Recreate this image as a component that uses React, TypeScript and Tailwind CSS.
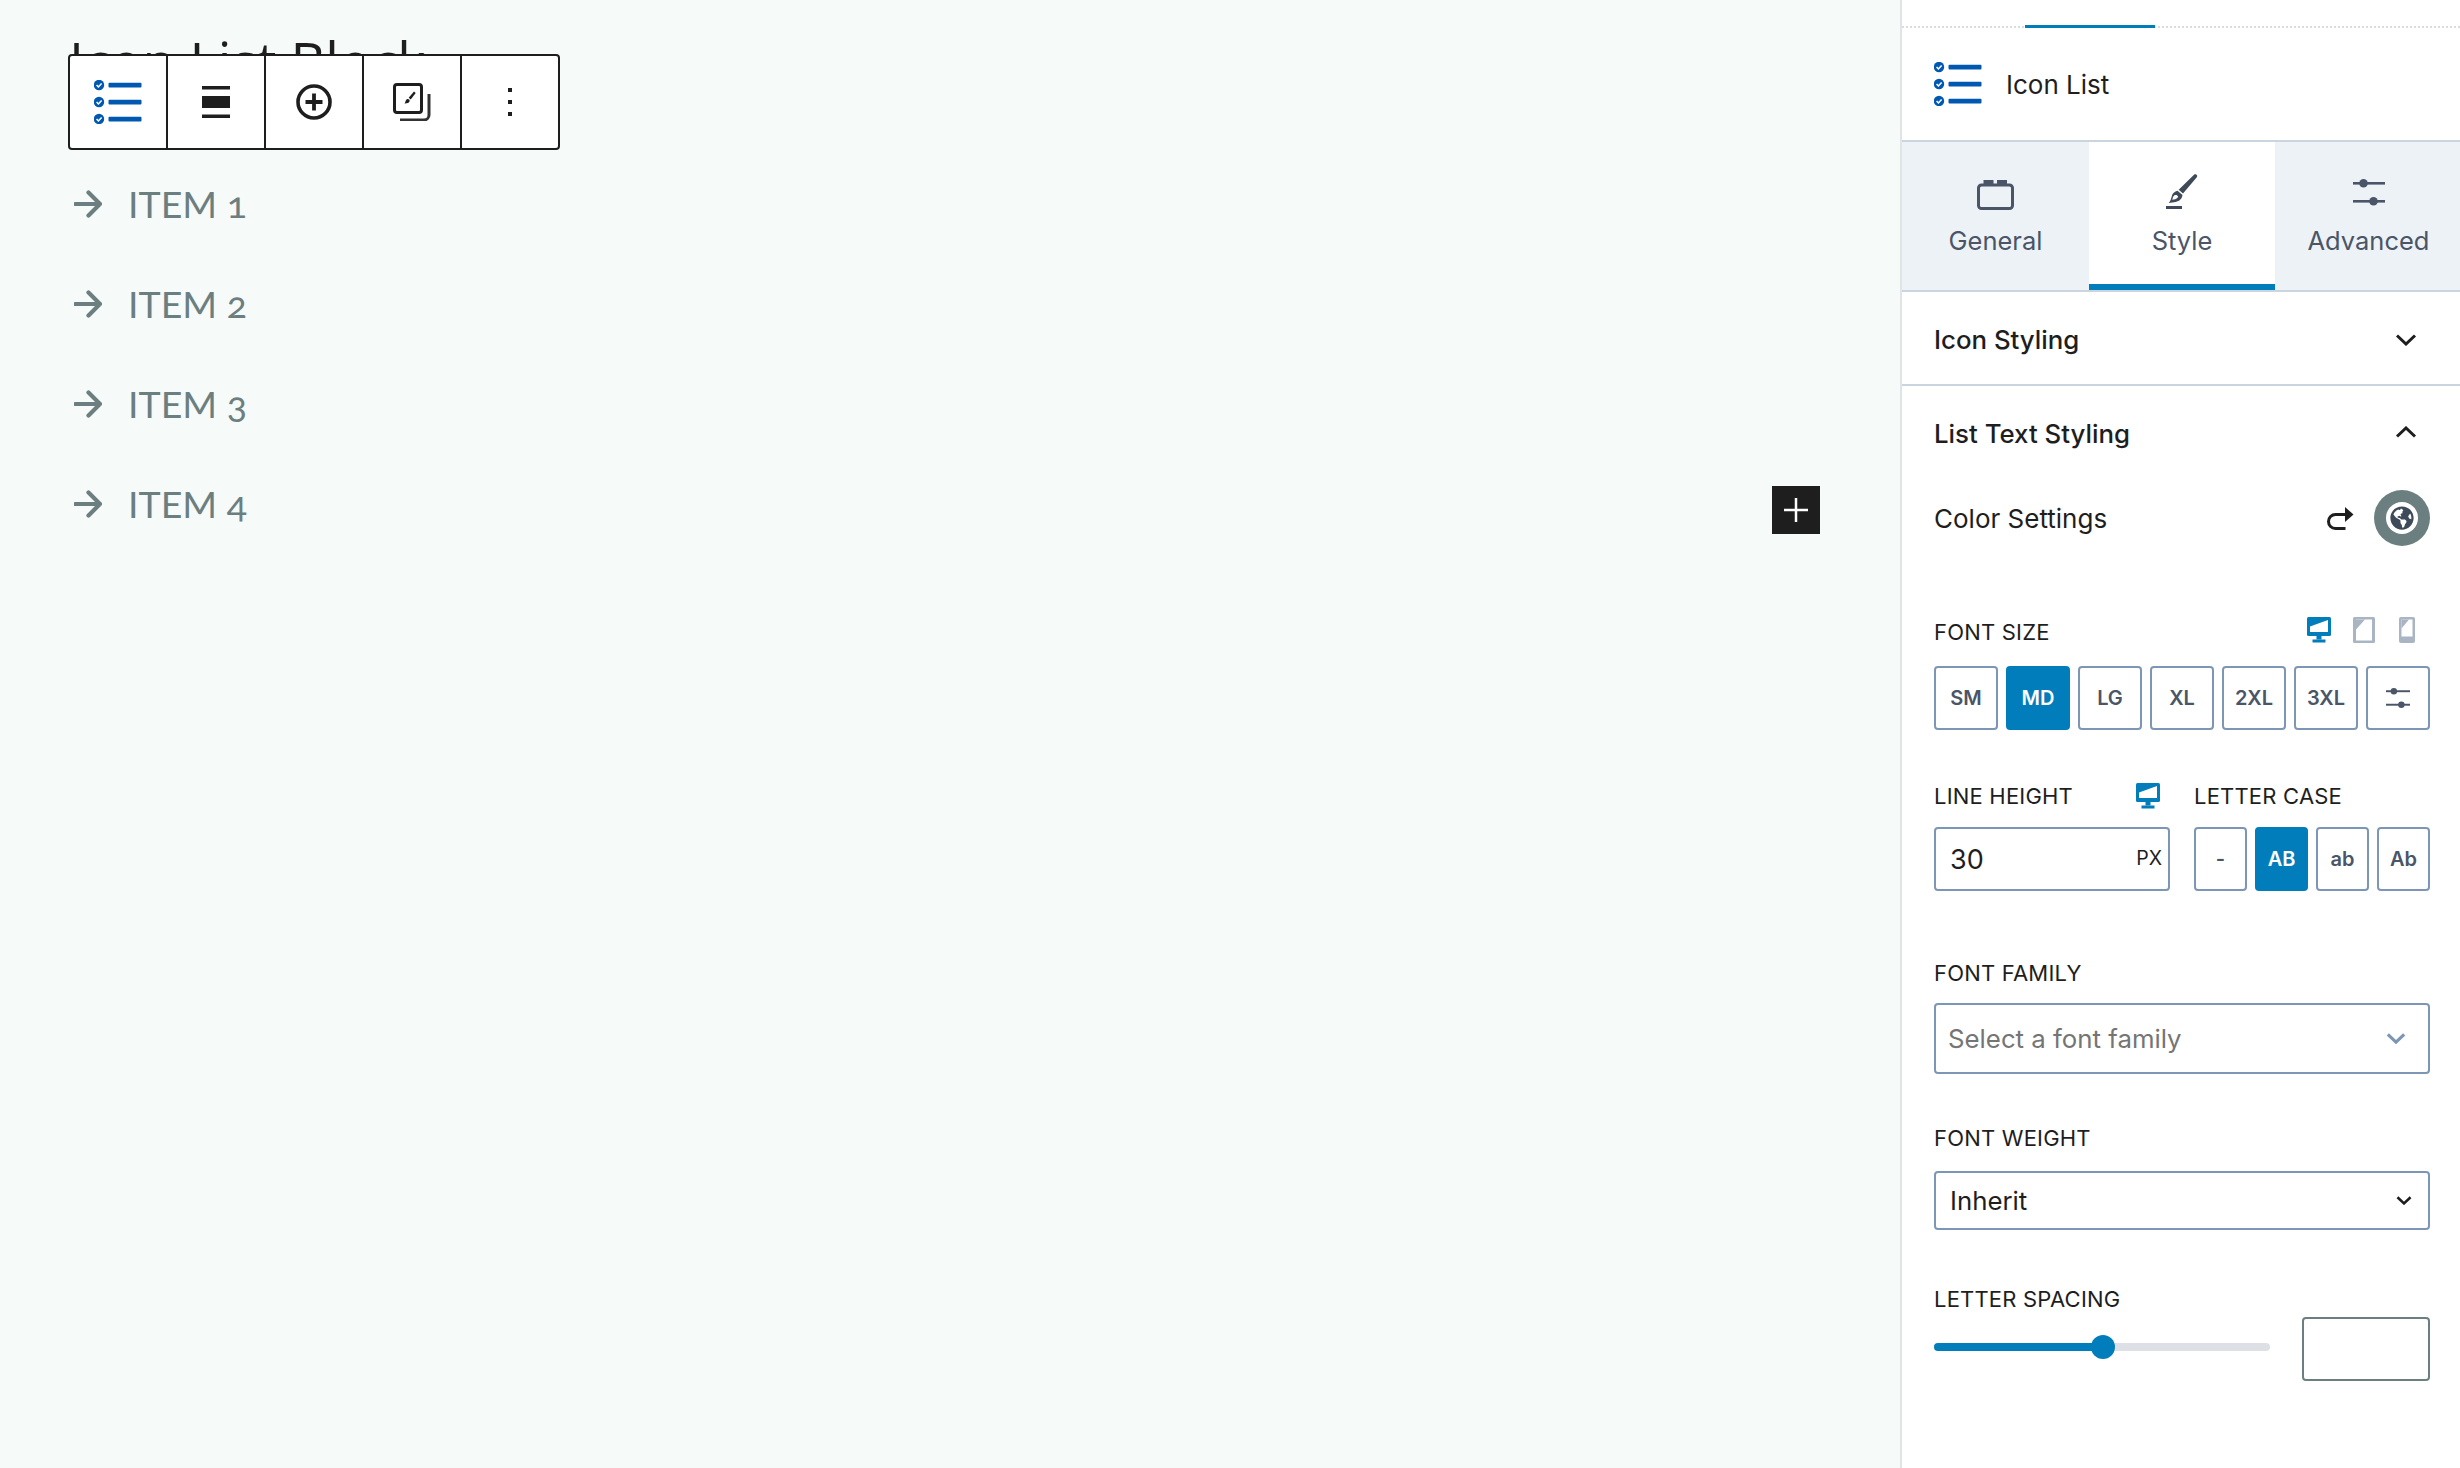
import React from "react";
import { FaGlobeAmericas } from "react-icons/fa";

const IconListIcon = () => (
  <svg width="48" height="44" viewBox="0 0 48 44" fill="none">
    {[5, 22, 39].map((y) => (
      <g key={y}>
        <circle cx="5" cy={y} r="5.2" fill="#0058b0" />
        <path d={`M2.6 ${y}l1.8 2 3.2-3.6`} stroke="#fff" strokeWidth="1.5" fill="none" />
        <rect x="14.5" y={y - 2.2} width="33" height="4.6" rx="1" fill="#0058b0" />
      </g>
    ))}
  </svg>
);

const Chevron = ({ up = false, color = "#1e1e1e", w = 22, sw = 3 }: { up?: boolean; color?: string; w?: number; sw?: number }) => (
  <svg width={w} height={w / 2 + 1} viewBox="0 0 22 12" fill="none">
    <path d={up ? "M2 10.5L11 2l9 8.5" : "M2 1.5L11 10l9-8.5"} stroke={color} strokeWidth={sw} />
  </svg>
);

const Sliders = ({ w = 32, color = "#4a5568" }: { w?: number; color?: string }) => (
  <svg width={w} height={(w * 27) / 32} viewBox="0 0 32 27" fill="none">
    <rect x="0" y="3" width="32" height="2.6" fill={color} />
    <rect x="0" y="21" width="32" height="2.6" fill={color} />
    <circle cx="10.5" cy="4.3" r="4.3" fill={color} />
    <circle cx="20.5" cy="22.3" r="4.3" fill={color} />
  </svg>
);

const Monitor = () => (
  <svg width="24" height="26" viewBox="0 0 24 26">
    <rect x="0" y="0" width="24" height="19" rx="1.5" fill="#027dbb" />
    <rect x="3" y="3" width="18" height="12" fill="#fff" />
    <path d="M3 3h18L3 9.5z" fill="#027dbb" />
    <rect x="9.5" y="19" width="5" height="3.5" fill="#027dbb" />
    <rect x="5.5" y="22.5" width="13" height="3" fill="#027dbb" />
  </svg>
);

const Tablet = () => (
  <svg width="22" height="26" viewBox="0 0 22 26">
    <rect x="0" y="0" width="22" height="26" rx="1.5" fill="#a9b5c3" />
    <rect x="3" y="2.5" width="16" height="21" fill="#fff" />
    <path d="M3 2.5h9L3 12.5z" fill="#a9b5c3" />
  </svg>
);

const Phone = () => (
  <svg width="16" height="26" viewBox="0 0 16 26">
    <rect x="0" y="0" width="16" height="26" rx="2" fill="#a9b5c3" />
    <rect x="2.5" y="2.5" width="11" height="17" fill="#fff" />
    <path d="M2.5 2.5h7.5l-7.5 9z" fill="#a9b5c3" />
  </svg>
);

const Arrow = () => (
  <svg width="28" height="28" viewBox="0 0 28 28" fill="none" className="shrink-0">
    <path d="M1.500 14h24.500M14.500 2.500L26 14 14.500 25.500" stroke="#6c7f80" strokeWidth="4.200" strokeLinecap="round" strokeLinejoin="round" />
  </svg>
);

const sizeBtn = "h-[64px] rounded-[4px] border-2 text-[20px] font-semibold flex items-center justify-center";
const off = "border-[#7e96b5] bg-white text-[#4a5568]";
const on = "border-[#027dbb] bg-[#027dbb] text-white";
const label = "text-[22px] tracking-[0.2px] text-[#1e1e1e]";

export default function App() {
  return (
    <div className="flex h-[1468px] w-[2460px] overflow-hidden bg-[#f6faf9] font-['Inter',sans-serif]">
      <main className="relative h-full flex-1 overflow-hidden pl-[69px]">
        <h1 className="h-[100px] pt-[25px] font-['Open_Sans',sans-serif] text-[54px] leading-[72px] font-medium text-[#1e1e1e]">
          Icon List Block
        </h1>

        <div className="absolute top-[54px] left-[68px] flex h-[96px] w-[492px] overflow-hidden rounded-[4px] border-2 border-[#1e1e1e] bg-white">
          <div className="flex w-[98px] items-center justify-center border-r-2 border-[#1e1e1e]">
            <IconListIcon />
          </div>
          <div className="flex w-[98px] items-center justify-center border-r-2 border-[#1e1e1e]">
            <svg width="28" height="32" viewBox="0 0 28 32" fill="#1e1e1e">
              <rect x="0" y="0" width="28" height="3.5" />
              <rect x="0" y="10" width="28" height="12" />
              <rect x="0" y="28.5" width="28" height="3.5" />
            </svg>
          </div>
          <div className="flex w-[98px] items-center justify-center border-r-2 border-[#1e1e1e]">
            <svg width="36" height="36" viewBox="0 0 36 36" fill="none" stroke="#1e1e1e">
              <circle cx="18" cy="18" r="16" strokeWidth="3.6" />
              <path d="M18 9.5v17M9.5 18h17" strokeWidth="3.8" />
            </svg>
          </div>
          <div className="flex w-[98px] items-center justify-center border-r-2 border-[#1e1e1e]">
            <svg width="38" height="38" viewBox="0 0 38 38" fill="none">
              <rect x="1.5" y="1.5" width="27" height="28" rx="2.5" stroke="#1e1e1e" strokeWidth="3" />
              <path d="M7 37h24a5 5 0 0 0 5-5V11" stroke="#333" strokeWidth="3" />
              <path d="M21 8.5l1.7 1.5-5 6.5-2-1.8z" fill="#1e1e1e" />
              <path d="M14.5 16c1.800 0 2.600 1.200 2 2.600-.6 1.500-2.800 2-5 1.900 1.200-1 .9-4 3-4.500z" fill="#1e1e1e" />
            </svg>
          </div>
          <div className="flex flex-1 items-center justify-center">
            <svg width="4" height="28" viewBox="0 0 4 28" fill="#1e1e1e">
              <rect y="0" width="4" height="4" />
              <rect y="12" width="4" height="4" />
              <rect y="24" width="4" height="4" />
            </svg>
          </div>
        </div>

        <ul className="mt-[79px] flex flex-col gap-[50px] pl-[5px] font-['Lato',sans-serif] text-[37.500px] leading-[50px] text-[#6c7f80] [font-feature-settings:'onum']">
          {["ITEM 1", "ITEM 2", "ITEM 3", "ITEM 4"].map((t) => (
            <li key={t} className="flex items-center gap-[26px]">
              <Arrow />
              <span className="oldstyle-nums">{t}</span>
            </li>
          ))}
        </ul>

        <button className="absolute top-[486px] left-[1772px] flex h-[48px] w-[48px] items-center justify-center bg-[#1e1e1e]">
          <svg width="24" height="24" viewBox="0 0 24 24" stroke="#fff" strokeWidth="2.500">
            <path d="M12 0v24M0 12h24" />
          </svg>
        </button>
      </main>

      <aside className="h-full w-[560px] shrink-0 border-l-2 border-[#e0e4e4] bg-white">
        <div className="h-[28px] border-b-2 border-dotted border-[#dcdcdc]">
          <div className="ml-[123px] h-[28px] w-[130px] border-b-[3px] border-[#027dbb]" />
        </div>

        <div className="flex h-[112px] items-center gap-[24px] pl-[32px]">
          <IconListIcon />
          <span className="text-[26px] text-[#1e1e1e]">Icon List</span>
        </div>

        <div className="grid h-[152px] grid-cols-[187px_186px_185px] border-y-2 border-[#cbd5e0] bg-[#edf2f7] text-[25.500px] text-[#4a5568]">
          <div className="flex flex-col items-center pt-[38px]">
            <svg width="37" height="30" viewBox="0 0 37 30" fill="none">
              <rect x="1.500" y="5" width="34" height="23.500" rx="3" stroke="#4a5568" strokeWidth="3" />
              <rect x="6.500" y="0" width="10" height="6" fill="#4a5568" />
              <rect x="20" y="0" width="10" height="6" fill="#4a5568" />
            </svg>
            <span className="mt-[13px] leading-[36px]">General</span>
          </div>
          <div className="flex flex-col items-center border-b-[6px] border-[#027dbb] bg-white pt-[32px]">
            <svg width="32" height="36" viewBox="0 0 32 36" fill="#3f4957">
              <path d="M28 .8c1.200-1 3-.2 3.200 1 .1.500-.1 1-.4 1.400L17 19.500l-4.300-3.800z" />
              <path d="M11.500 16.800l5 4.300c-.4 3.700-3 6.300-6.800 6.900l-7 1c1.800-1.800 2.400-4.300 3-6.500.6-3 3-5.200 5.800-5.700zM9 21c-1.300.6-2 1.800-2.300 3.200l-.5 1.500 3-.5c1.300-.3 2.600-1.400 3-2.700l-1.600-1.500z" fillRule="evenodd" />
              <rect x="0" y="32" width="16" height="3" />
            </svg>
            <span className="mt-[13px] leading-[36px]">Style</span>
          </div>
          <div className="flex flex-col items-center pt-[37px] pl-[2px]">
            <Sliders />
            <span className="mt-[17px] leading-[36px]">Advanced</span>
          </div>
        </div>

        <div className="flex h-[94px] items-center justify-between border-b-2 border-[#cbd5e0] pt-[4px] pr-[43px] pl-[32px]">
          <span className="text-[25.800px] font-medium text-[#1e1e1e]">Icon Styling</span>
          <Chevron />
        </div>

        <div className="pr-[30px] pl-[32px]">
          <div className="mt-[32px] flex h-[32px] items-center justify-between pr-[13px]">
            <span className="text-[25.800px] leading-[32px] font-medium text-[#1e1e1e]">List Text Styling</span>
            <div className="mb-[4px]">
              <Chevron up />
            </div>
          </div>

          <div className="mt-[40px] flex h-[56px] items-center">
            <span className="flex-1 text-[26px] text-[#1e1e1e]">Color Settings</span>
            <svg width="29" height="25" viewBox="0 0 28 25" fill="none" className="mr-[20px]">
              <path d="M20 22.500H10a7 7 0 0 1 0-14h11" stroke="#1e1e1e" strokeWidth="3" />
              <path d="M19.500 1L28 8.500 19.500 16z" fill="#1e1e1e" />
            </svg>
            <div className="flex h-[56px] w-[56px] items-center justify-center rounded-full bg-[#6c7f80]">
              <div className="flex h-[32px] w-[32px] items-center justify-center rounded-full bg-white">
                <FaGlobeAmericas className="text-[24px] text-[#3e4a59]" />
              </div>
            </div>
          </div>

          <div className="mt-[71px] flex h-[30px] items-start">
            <span className={`${label} flex-1 leading-[30px]`}>FONT SIZE</span>
            <div className="mr-[15px] flex">
              <Monitor />
              <div className="mr-[24px] ml-[22px]">
                <Tablet />
              </div>
              <Phone />
            </div>
          </div>

          <div className="mt-[19px] grid grid-cols-7 gap-[8px]">
            <button className={`${sizeBtn} ${off}`}>SM</button>
            <button className={`${sizeBtn} ${on}`}>MD</button>
            <button className={`${sizeBtn} ${off}`}>LG</button>
            <button className={`${sizeBtn} ${off}`}>XL</button>
            <button className={`${sizeBtn} ${off}`}>2XL</button>
            <button className={`${sizeBtn} ${off}`}>3XL</button>
            <button className={`${sizeBtn} ${off}`}>
              <Sliders w={24} />
            </button>
          </div>

          <div className="mt-[54px] grid grid-cols-[236px_236px] gap-x-[24px]">
            <div className="flex h-[24px] items-center justify-between pr-[10px]">
              <span className={`${label} leading-[24px]`}>LINE HEIGHT</span>
              <Monitor />
            </div>
            <div className="flex h-[24px] items-center">
              <span className={`${label} leading-[24px]`}>LETTER CASE</span>
            </div>
            <div className="mt-[19px] flex h-[64px] items-center justify-between rounded-[4px] border-2 border-[#7e96b5] pr-[6px] pl-[14px]">
              <span className="pt-[2px] text-[27px] text-[#1e1e1e]">30</span>
              <span className="text-[19.500px] text-[#1e1e1e]">PX</span>
            </div>
            <div className="mt-[19px] grid grid-cols-4 gap-[8px]">
              <button className={`${sizeBtn} ${off}`}>-</button>
              <button className={`${sizeBtn} ${on}`}>AB</button>
              <button className={`${sizeBtn} ${off}`}>ab</button>
              <button className={`${sizeBtn} ${off}`}>Ab</button>
            </div>
          </div>

          <div className={`${label} mt-[70px] leading-[24px]`}>FONT FAMILY</div>
          <div className="mt-[18px] flex h-[71px] items-center justify-between rounded-[4px] border-2 border-[#7e96b5] pr-[22px] pl-[12px]">
            <span className="pt-[2px] text-[25.800px] text-[#757575]">Select a font family</span>
            <Chevron color="#7e96b5" w={20} sw={3.500} />
          </div>

          <div className={`${label} mt-[52px] leading-[24px]`}>FONT WEIGHT</div>
          <div className="mt-[21px] flex h-[59px] items-center justify-between rounded-[4px] border-2 border-[#7e96b5] pr-[16px] pl-[14px]">
            <span className="pt-[2px] text-[25.800px] text-[#1e1e1e]">Inherit</span>
            <Chevron w={16} sw={3.500} />
          </div>

          <div className={`${label} mt-[57px] leading-[24px]`}>LETTER SPACING</div>
          <div className="mt-[6px] flex h-[64px] items-center justify-between">
            <div className="relative mb-[5px] h-[8px] w-[336px] rounded-full bg-[#dde1e6]">
              <div className="h-full w-[169px] rounded-full bg-[#027dbb]" />
              <div className="absolute top-[-8px] left-[157px] h-[24px] w-[24px] rounded-full bg-[#027dbb]" />
            </div>
            <div className="h-[64px] w-[128px] rounded-[4px] border-2 border-[#6c7f80] bg-white" />
          </div>
        </div>
      </aside>
    </div>
  );
}
